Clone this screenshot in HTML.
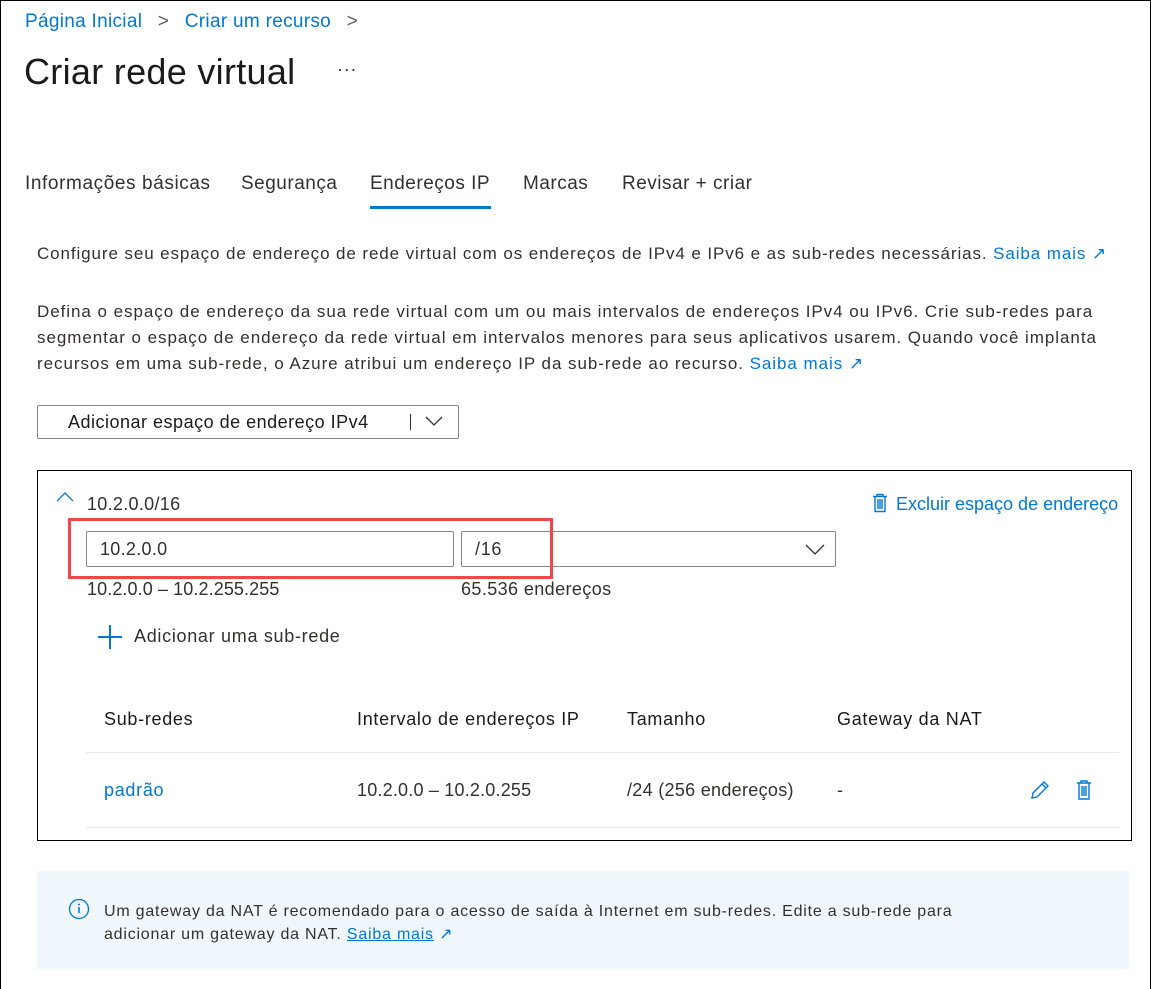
<!DOCTYPE html>
<html><head><meta charset="utf-8"><style>
*{margin:0;padding:0;box-sizing:border-box}
html,body{width:1151px;height:989px;overflow:hidden;background:#fff}
body{font-family:"Liberation Sans",sans-serif;color:#323130;position:relative;border:1px solid #000;border-bottom:none;letter-spacing:0.7px}
.a{position:absolute;white-space:nowrap}
.blue{color:#0078d4}
</style></head><body>
<div class="a blue" style="left:24px;top:10px;font-size:19px;letter-spacing:0.3px">Página Inicial <span style="color:#605e5c;margin:0 10px">&gt;</span> Criar um recurso <span style="color:#605e5c;margin-left:10px">&gt;</span></div>
<div class="a" style="left:23px;top:50px;font-size:36px;color:#1b1b1b;letter-spacing:0.3px">Criar rede virtual</div>
<div class="a" style="left:336px;top:58px;font-size:18px">···</div>
<div class="a" style="left:24px;top:172px;font-size:19px;letter-spacing:0.6px">Informações básicas</div>
<div class="a" style="left:240px;top:172px;font-size:19px;letter-spacing:0.5px">Segurança</div>
<div class="a" style="left:369px;top:172px;font-size:19px;letter-spacing:0.5px">Endereços IP</div>
<div class="a" style="left:369px;top:205px;width:121px;height:3px;background:#0078d4"></div>
<div class="a" style="left:522px;top:172px;font-size:19px;letter-spacing:0.5px">Marcas</div>
<div class="a" style="left:621px;top:172px;font-size:19px;letter-spacing:0.5px">Revisar + criar</div>
<div class="a" style="left:36px;top:243px;font-size:17px;letter-spacing:0.9px">Configure seu espaço de endereço de rede virtual com os endereços de IPv4 e IPv6 e as sub-redes necessárias. <span class="blue">Saiba mais ↗</span></div>
<div class="a" style="left:36px;top:298px;font-size:17px;line-height:26px;letter-spacing:0.95px">Defina o espaço de endereço da sua rede virtual com um ou mais intervalos de endereços IPv4 ou IPv6. Crie sub-redes para<br>segmentar o espaço de endereço da rede virtual em intervalos menores para seus aplicativos usarem. Quando você implanta<br>recursos em uma sub-rede, o Azure atribui um endereço IP da sub-rede ao recurso. <span class="blue">Saiba mais ↗</span></div>
<div class="a" style="left:36px;top:404px;width:422px;height:34px;border:1px solid #8a8886;border-radius:2px"></div>
<div class="a" style="left:67px;top:411px;font-size:18px;color:#1b1b1b;letter-spacing:0.5px">Adicionar espaço de endereço IPv4</div>
<div class="a" style="left:409px;top:413px;width:1px;height:16px;background:#323130"></div>
<svg class="a" style="left:424px;top:414px" width="18" height="12"><path d="M1 2l8 8 8-8" fill="none" stroke="#323130" stroke-width="1.3"/></svg>
<div class="a" style="left:36px;top:469px;width:1095px;height:371px;border:1px solid #000"></div>
<svg class="a" style="left:54px;top:490px" width="20" height="12"><path d="M2 10l8-8 8 8" fill="none" stroke="#0078d4" stroke-width="1.3"/></svg>
<div class="a" style="left:86px;top:493px;font-size:18px;letter-spacing:0.3px">10.2.0.0/16</div>
<svg class="a" style="left:871px;top:492px" width="16" height="20"><path d="M1 3.5h14M5 3.5V1.5h6v2M3 3.5v15h10v-15M6 6v10M8 6v10M10 6v10" fill="none" stroke="#0078d4" stroke-width="1.4"/></svg>
<div class="a blue" style="left:895px;top:493px;font-size:18px;letter-spacing:0px">Excluir espaço de endereço</div>
<div class="a" style="left:85px;top:530px;width:368px;height:36px;border:1px solid #8a8886;border-radius:2px"></div>
<div class="a" style="left:99px;top:538px;font-size:18px;letter-spacing:0.3px">10.2.0.0</div>
<div class="a" style="left:460px;top:530px;width:375px;height:36px;border:1px solid #8a8886;border-radius:2px"></div>
<div class="a" style="left:474px;top:538px;font-size:18px">/16</div>
<svg class="a" style="left:804px;top:542px" width="20" height="12"><path d="M1 2l9 9 9-9" fill="none" stroke="#323130" stroke-width="1.3"/></svg>
<div class="a" style="left:67px;top:517px;width:485px;height:61px;border:3px solid #f04848"></div>
<div class="a" style="left:86px;top:578px;font-size:18px;letter-spacing:0.1px">10.2.0.0 – 10.2.255.255</div>
<div class="a" style="left:460px;top:578px;font-size:18px;letter-spacing:0.4px">65.536 endereços</div>
<svg class="a" style="left:96px;top:623px" width="26" height="26"><path d="M13 1v24M1 13h24" stroke="#0078d4" stroke-width="2"/></svg>
<div class="a" style="left:133px;top:625px;font-size:18px">Adicionar uma sub-rede</div>
<div class="a" style="left:103px;top:708px;font-size:18px;color:#1b1b1b">Sub-redes</div>
<div class="a" style="left:356px;top:708px;font-size:18px;color:#1b1b1b">Intervalo de endereços IP</div>
<div class="a" style="left:626px;top:708px;font-size:18px;color:#1b1b1b">Tamanho</div>
<div class="a" style="left:836px;top:708px;font-size:18px;color:#1b1b1b">Gateway da NAT</div>
<div class="a" style="left:85px;top:751px;width:1033px;border-top:1px solid #edebe9"></div>
<div class="a blue" style="left:103px;top:779px;font-size:18px">padrão</div>
<div class="a" style="left:356px;top:779px;font-size:18px;letter-spacing:0.2px">10.2.0.0 – 10.2.0.255</div>
<div class="a" style="left:626px;top:779px;font-size:18px;letter-spacing:0.3px">/24 (256 endereços)</div>
<div class="a" style="left:836px;top:779px;font-size:18px">-</div>
<svg class="a" style="left:1028px;top:778px" width="22" height="22"><path d="M3 19l1-5L15 3l4 4L8 18z M13 5l4 4" fill="none" stroke="#0078d4" stroke-width="1.4"/></svg>
<svg class="a" style="left:1074px;top:778px" width="18" height="22"><path d="M2 4h14M6 4V2h6v2M4 4v16h10V4M7 7v10M9 7v10M11 7v10" fill="none" stroke="#0078d4" stroke-width="1.4"/></svg>
<div class="a" style="left:85px;top:826px;width:1033px;border-top:1px solid #edebe9"></div>
<div class="a" style="left:36px;top:870px;width:1092px;height:98px;background:#eff6fc"></div>
<svg class="a" style="left:67px;top:897px" width="22" height="22"><circle cx="11" cy="11" r="9.5" fill="none" stroke="#0078d4" stroke-width="1.3"/><path d="M11 9v6" stroke="#0078d4" stroke-width="1.5"/><circle cx="11" cy="6.5" r="1" fill="#0078d4"/></svg>
<div class="a" style="left:103px;top:899px;font-size:16px;line-height:23px;letter-spacing:0.78px">Um gateway da NAT é recomendado para o acesso de saída à Internet em sub-redes. Edite a sub-rede para<br>adicionar um gateway da NAT. <span class="blue" style="text-decoration:underline">Saiba mais</span> <span class="blue">↗</span></div>
</body></html>
